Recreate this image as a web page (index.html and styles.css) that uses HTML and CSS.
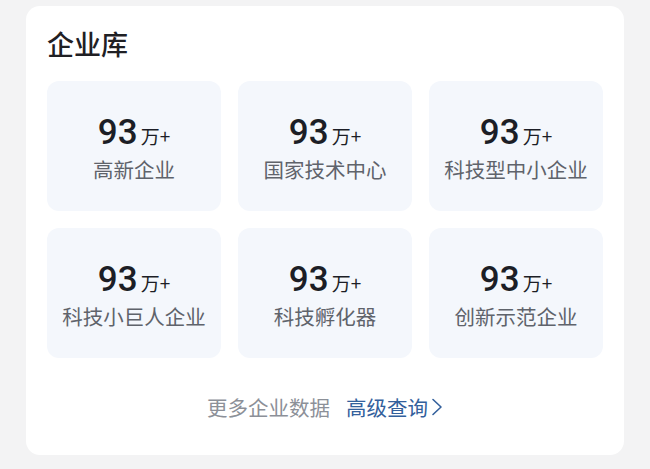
FILE: index.html
```html
<!DOCTYPE html>
<html lang="zh-CN">
<head>
    <meta charset="UTF-8">
    <meta name="viewport" content="width=device-width, initial-scale=1.0">
    <title>企业库</title>
    <link rel="stylesheet" href="styles.css">
</head>
<body>
    <div class="card">
        <h2 class="title">企业库</h2>
        <div class="grid">
            <div class="tile">
                <div class="num">93<span class="unit">万+</span></div>
                <div class="label">高新企业</div>
            </div>
            <div class="tile">
                <div class="num">93<span class="unit">万+</span></div>
                <div class="label">国家技术中心</div>
            </div>
            <div class="tile">
                <div class="num">93<span class="unit">万+</span></div>
                <div class="label">科技型中小企业</div>
            </div>
            <div class="tile">
                <div class="num">93<span class="unit">万+</span></div>
                <div class="label">科技小巨人企业</div>
            </div>
            <div class="tile">
                <div class="num">93<span class="unit">万+</span></div>
                <div class="label">科技孵化器</div>
            </div>
            <div class="tile">
                <div class="num">93<span class="unit">万+</span></div>
                <div class="label">创新示范企业</div>
            </div>
        </div>
        <div class="more">
            <span class="more-text">更多企业数据</span>
            <a class="more-link" href="#">高级查询<svg class="chev" width="12" height="20" viewBox="0 0 12 20"><path d="M2 2.5 L10 10 L2 17.5" fill="none" stroke="currentColor" stroke-width="1.6" stroke-linecap="round" stroke-linejoin="round"/></svg></a>
        </div>
    </div>
</body>
</html>
```

FILE: styles.css
```css
body {
    margin: 0;
    padding: 6px 26px 0;
    background-color: #f3f3f4;
    font-family: "Noto Sans CJK SC", "Noto Sans", sans-serif;
    height: 469px;
    box-sizing: border-box;
    overflow: hidden;
}

.card {
    background-color: #fff;
    border-radius: 14px;
    padding: 21px 21px 0;
    height: 449px;
    box-sizing: border-box;
}

.title {
    margin: 0;
    font-size: 27px;
    line-height: 34px;
    font-weight: 500;
    color: #1f2024;
}

.grid {
    display: grid;
    grid-template-columns: repeat(3, 1fr);
    gap: 17px;
    margin-top: 20px;
}

.tile {
    background-color: #f4f7fc;
    border-radius: 12px;
    height: 130px;
    display: flex;
    flex-direction: column;
    align-items: center;
    justify-content: center;
    padding-top: 2px;
    box-sizing: border-box;
}

.num {
    font-family: "Roboto", "Noto Sans", sans-serif;
    font-size: 35px;
    line-height: 40px;
    font-weight: 500;
    color: #1c1e26;
}

.unit {
    font-family: "Noto Sans CJK SC", sans-serif;
    font-size: 19px;
    font-weight: 400;
    margin-left: 3px;
}

.label {
    margin-top: 0;
    font-size: 20.5px;
    line-height: 26px;
    color: #5f636b;
}

.more {
    display: flex;
    justify-content: center;
    align-items: center;
    margin-top: 36px;
    font-size: 20.5px;
    line-height: 26px;
}

.more-text {
    color: #8c9098;
}

.more-link {
    margin-left: 16px;
    color: #33609c;
    text-decoration: none;
    display: flex;
    align-items: center;
}

.chev {
    margin-left: 3px;
}
```
